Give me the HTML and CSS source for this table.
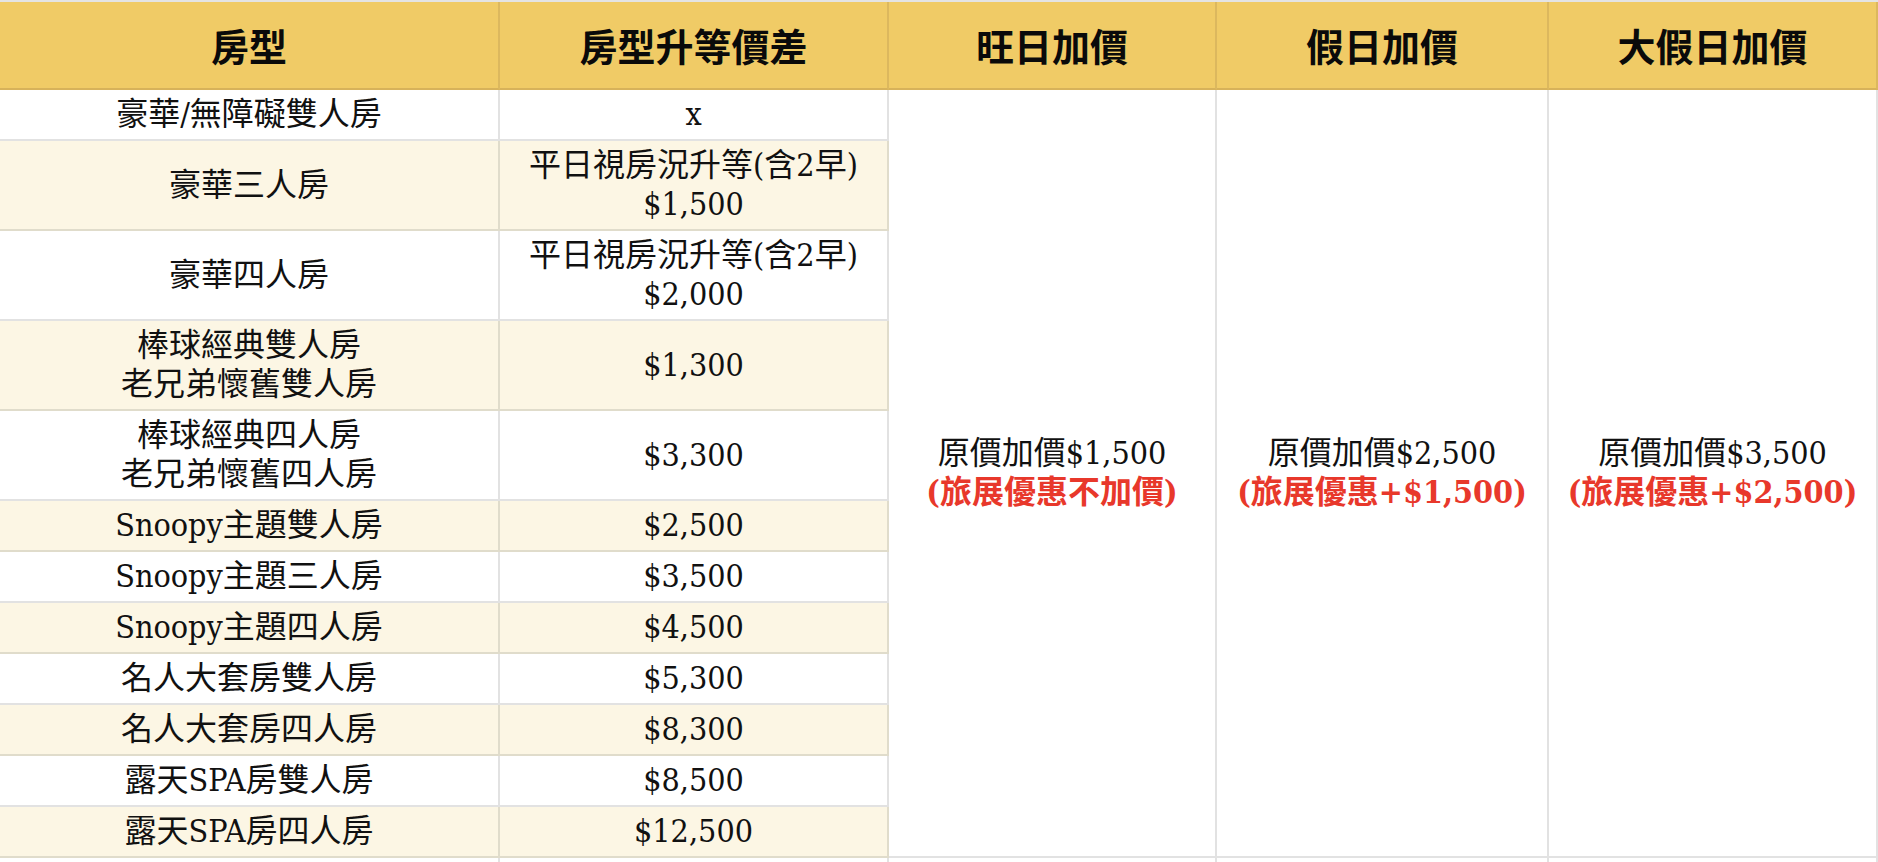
FILE: index.html
```html
<!DOCTYPE html>
<html lang="zh-Hant">
<head>
<meta charset="utf-8">
<title>房型升等價差</title>
<link rel="stylesheet" href="styles.css">
</head>
<body>
<table class="price-table">
  <colgroup>
    <col class="c1"><col class="c2"><col class="c3"><col class="c4"><col class="c5">
  </colgroup>
  <thead>
    <tr>
      <th>房型</th>
      <th>房型升等價差</th>
      <th>旺日加價</th>
      <th>假日加價</th>
      <th>大假日加價</th>
    </tr>
  </thead>
  <tbody>
    <tr>
      <td>豪華/無障礙雙人房</td>
      <td>x</td>
      <td class="merged" rowspan="12">原價加價$1,500<br><span class="promo">(旅展優惠不加價)</span></td>
      <td class="merged" rowspan="12">原價加價$2,500<br><span class="promo">(旅展優惠+$1,500)</span></td>
      <td class="merged" rowspan="12">原價加價$3,500<br><span class="promo">(旅展優惠+$2,500)</span></td>
    </tr>
    <tr class="alt"><td>豪華三人房</td><td>平日視房況升等(含2早)<br>$1,500</td></tr>
    <tr><td>豪華四人房</td><td>平日視房況升等(含2早)<br>$2,000</td></tr>
    <tr class="alt"><td>棒球經典雙人房<br>老兄弟懷舊雙人房</td><td>$1,300</td></tr>
    <tr><td>棒球經典四人房<br>老兄弟懷舊四人房</td><td>$3,300</td></tr>
    <tr class="alt"><td>Snoopy主題雙人房</td><td>$2,500</td></tr>
    <tr><td>Snoopy主題三人房</td><td>$3,500</td></tr>
    <tr class="alt"><td>Snoopy主題四人房</td><td>$4,500</td></tr>
    <tr><td>名人大套房雙人房</td><td>$5,300</td></tr>
    <tr class="alt"><td>名人大套房四人房</td><td>$8,300</td></tr>
    <tr><td>露天SPA房雙人房</td><td>$8,500</td></tr>
    <tr class="alt"><td>露天SPA房四人房</td><td>$12,500</td></tr>
    <tr class="tail"><td>&nbsp;</td><td>&nbsp;</td><td>&nbsp;</td><td>&nbsp;</td><td>&nbsp;</td></tr>
  </tbody>
</table>
</body>
</html>
```

FILE: styles.css
```css
html, body {
  margin: 0;
  padding: 0;
  background: #ffffff;
}

.price-table {
  width: 1878px;
  table-layout: fixed;
  border-collapse: separate;
  border-spacing: 0;
  border-top: 2px solid #e4e4e4;
  font-family: "DejaVu Serif Condensed", "Liberation Serif", "Noto Sans CJK TC", serif;
  font-size: 32px;
  line-height: 39px;
  color: #111111;
}

.c1 { width: 500px; }
.c2 { width: 389px; }
.c3 { width: 328px; }
.c4 { width: 332px; }
.c5 { width: 329px; }

.price-table th {
  box-sizing: border-box;
  height: 88px;
  padding: 0;
  background: #f0cb66;
  border-right: 2px solid #dcb85e;
  border-bottom: 2px solid #d7b25a;
  font-family: "Noto Sans CJK TC", sans-serif;
  font-weight: 700;
  font-size: 38px;
  line-height: 44px;
  color: #0a0a0a;
  text-align: center;
  vertical-align: middle;
}

.price-table td {
  padding: 5px 0;
  text-align: center;
  vertical-align: middle;
  border-right: 2px solid #e2e2e2;
  border-bottom: 2px solid #e2e2e2;
  background: #ffffff;
}

.price-table tr.alt td {
  background: #fcf6e4;
  border-bottom-color: #e0dccb;
}

.price-table tr.alt td:first-child,
.price-table tr.alt td:nth-child(2) {
  border-right-color: #e0dccb;
}

.price-table td.merged {
  background: #ffffff;
}

.promo {
  font-weight: 700;
  color: #e8382b;
}
```
